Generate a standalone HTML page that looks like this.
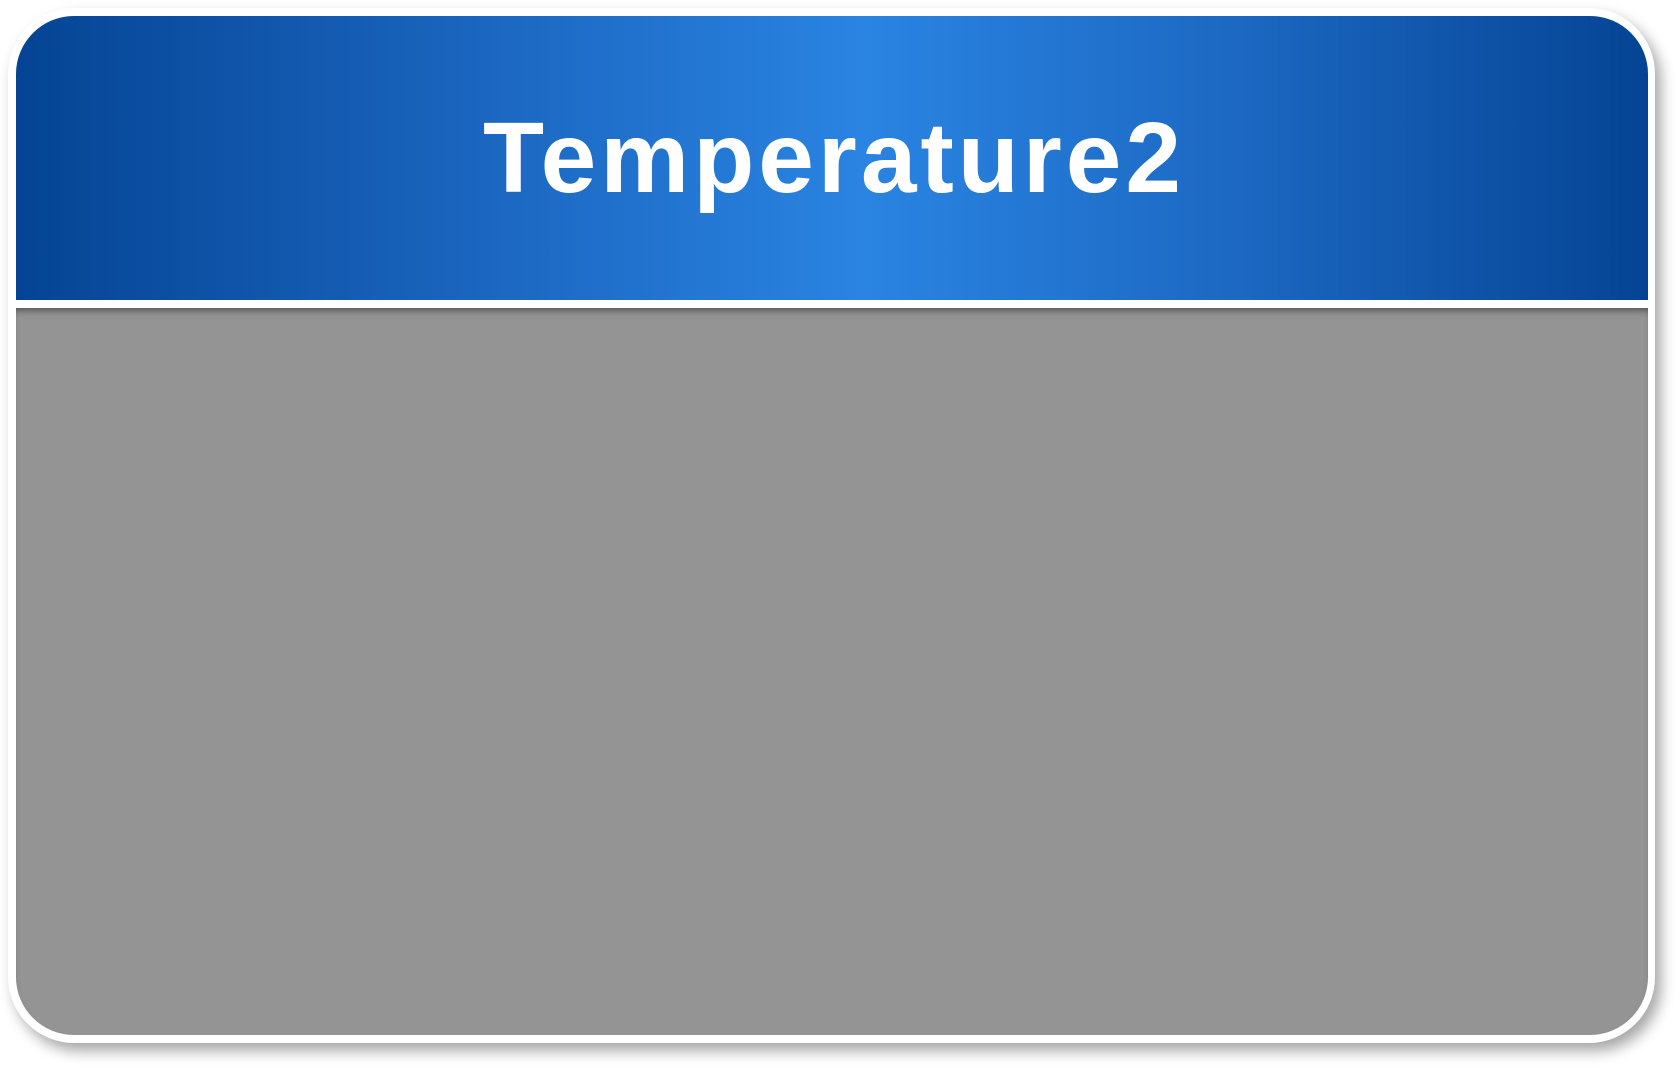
<!DOCTYPE html>
<html><head><style>
html,body{margin:0;padding:0;width:1680px;height:1068px;background:#fff;overflow:hidden}
.card{position:absolute;left:8px;top:8px;width:1647px;height:1035px;background:#fff;border-radius:66px;box-shadow:6px 8px 14px rgba(0,0,0,0.35)}
.head{position:absolute;left:16px;top:16px;width:1632px;height:284px;border-radius:58px 58px 0 0;
background:linear-gradient(90deg,#054494 0%,#1c68c2 30%,#2a84e2 52%,#1c68c2 75%,#054494 100%)}
.body{position:absolute;left:16px;top:308px;width:1632px;height:727px;background:#949494;border-radius:0 0 58px 58px;box-shadow:inset 0 6px 8px -4px rgba(0,0,0,0.5)}
.t{position:absolute;left:-6px;width:1680px;top:101px;text-align:center;color:#fff;font:bold 100px "Liberation Sans",sans-serif;letter-spacing:4px}
</style></head><body>
<div class="card"></div>
<div class="head"></div>
<div class="body"></div>
<div class="t">Temperature2</div>
</body></html>
